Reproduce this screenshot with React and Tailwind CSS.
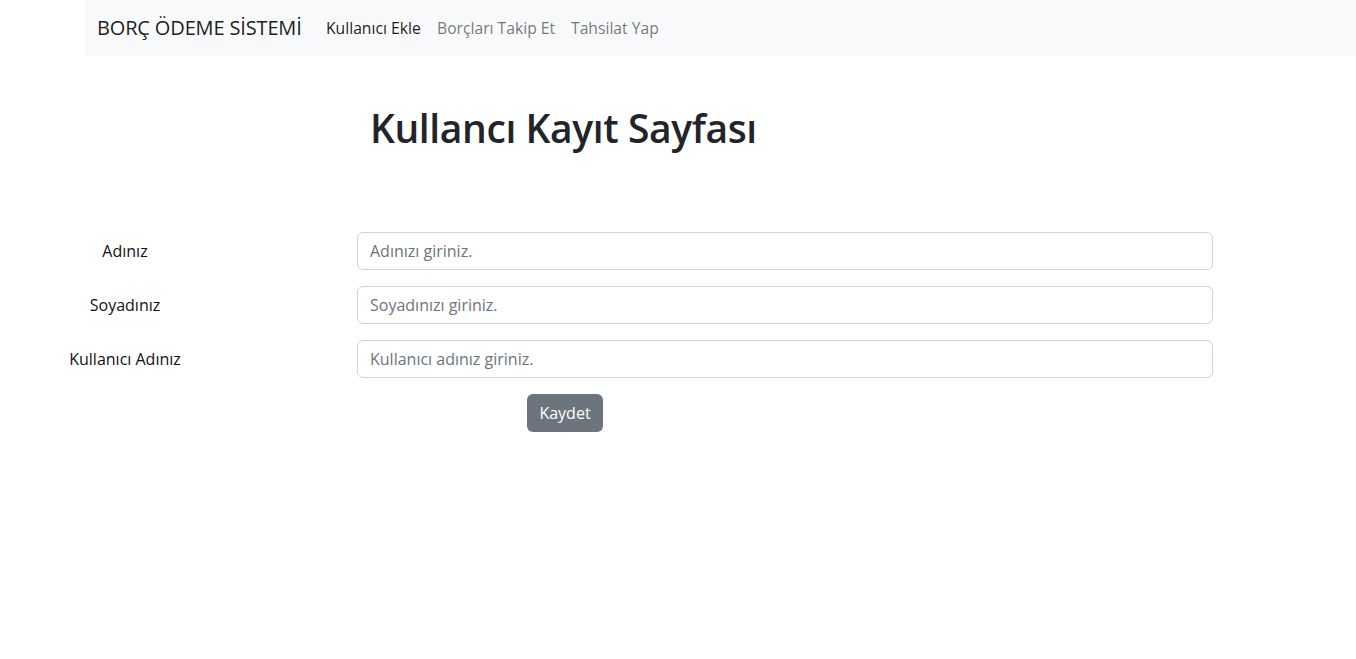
import React from 'react';

const fields = [
  { label: 'Adınız', placeholder: 'Adınızı giriniz.' },
  { label: 'Soyadınız', placeholder: 'Soyadınızı giriniz.' },
  { label: 'Kullanıcı Adınız', placeholder: 'Kullanıcı adınız giriniz.' },
];

const App = () => {
  return (
    <div className="min-h-screen bg-white text-[#212529]" style={{ fontFamily: '"Open Sans", "Noto Sans", sans-serif' }}>
      {/* Navbar */}
      <nav className="ml-[85px] h-[56px] bg-[#f8f9fa] flex items-center pl-3">
        <a className="w-[229px] shrink-0 text-[20px] leading-[30px] text-black/90 tracking-[-0.15px] whitespace-nowrap">BORÇ ÖDEME SİSTEMİ</a>
        <div className="flex items-center text-[15.7px] leading-6 whitespace-nowrap">
          <a className="w-[111px] text-black/90">Kullanıcı Ekle</a>
          <a className="w-[134px] text-black/55">Borçları Takip Et</a>
          <a className="text-black/55">Tahsilat Yap</a>
        </div>
      </nav>

      {/* Title */}
      <h1 className="ml-[370px] mt-[48px] text-[39px] leading-[48px] font-semibold tracking-[-0.4px]">Kullancı Kayıt Sayfası</h1>

      {/* Form */}
      <form className="mt-[80px] flex flex-col gap-4">
        {fields.map((f) => (
          <div key={f.label} className="flex items-center">
            <label className="w-[250px] text-center text-[16px] text-[#111]">{f.label}</label>
            <input
              type="text"
              placeholder={f.placeholder}
              className="ml-[107px] w-[856px] h-[38px] px-3 text-[16px] border border-[#ced4da] rounded-[6px] placeholder:text-[#6c757d] outline-none"
            />
          </div>
        ))}
        <div>
          <button type="button" className="ml-[527px] h-[38px] w-[76px] rounded-[6px] bg-[#6c757d] text-white text-[16px]">
            Kaydet
          </button>
        </div>
      </form>
    </div>
  );
};

export default App;
